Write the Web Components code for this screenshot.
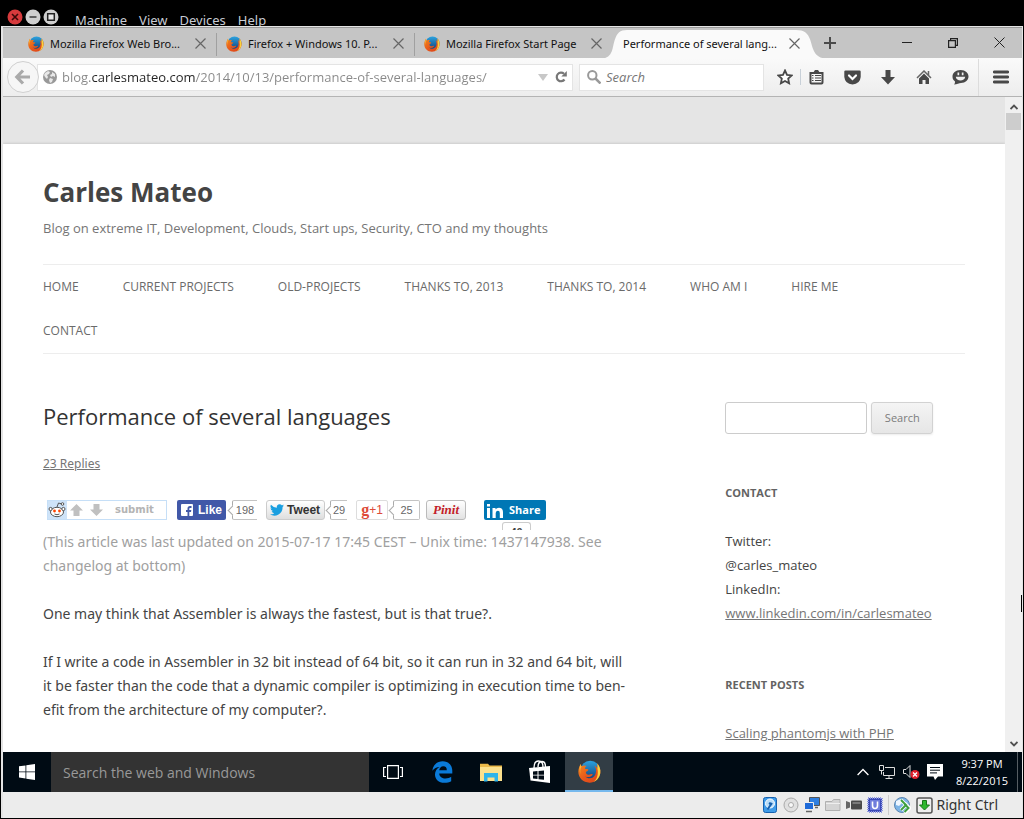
<!DOCTYPE html>
<html lang="en">
<head>
<meta charset="utf-8">
<title>Performance of several languages</title>
<style>
html,body{margin:0;height:100%;background:#000}
body{font-family:"Open Sans","Noto Sans",sans-serif}
</style>
</head>
<body>
<vm-window></vm-window>
<script>
const base = `*{box-sizing:border-box}button{font:inherit;border:0;background:none;padding:0;margin:0;color:inherit}svg{display:block}input{font:inherit;border:0;outline:0;margin:0;min-width:0}a{color:inherit;text-decoration:none}`;
function define(name, css, html) {
  const t = document.createElement('template');
  t.innerHTML = `<style>${base}${css}</style>${html}`;
  customElements.define(name, class extends HTMLElement {
    constructor() {
      super();
      this.attachShadow({mode: 'open'}).append(t.content.cloneNode(true));
    }
  });
}

define('fox-icon', `:host{display:block;width:16px;height:16px;flex:none}svg{width:100%;height:100%}`, `
<svg viewBox="0 0 32 32" aria-hidden="true">
<defs><linearGradient id="o" x1="0" y1="0" x2="1" y2="1"><stop offset="0" stop-color="#f08a1c"/><stop offset=".5" stop-color="#e8581b"/><stop offset="1" stop-color="#d8401a"/></linearGradient>
<linearGradient id="b" x1="0" y1="0" x2="0" y2="1"><stop offset="0" stop-color="#2ba3e0"/><stop offset="1" stop-color="#123a72"/></linearGradient></defs>
<circle cx="17" cy="15" r="14" fill="url(#b)"/>
<path d="M27 5c3 4 4.600 8 4 13-1 8-7.500 13.500-15 13.500C7 31.500.5 25 .5 16.500.5 12 2 8 4 5.500c0 1.500.3 2.500 1 3.500 2-1.500 4.500-1.500 7-.5-1.500 1-2.500 2.500-2 4 2 0 4 0 4.500 1-.5 1.500-2 2-3.500 3-.5 2 1 4.500 4.500 4 2-.3 3.500-1.500 5-.5-2 4-7 4.500-10.500 3 4 4 11.500 3 14-2.500 2-4.500 1.500-9-1-12.500 2 1 3.500 2.500 4 4 .3-2 .3-4.500 0-7z" fill="url(#o)"/>
<path d="M27 5c3 4 4.600 8 4 13-.8 6-4.500 10.500-9.500 12.500C27 26 28.500 20 27 12c.3-2 .3-4.500 0-7z" fill="#fbd23c"/>
<path d="M4 5.500c0 1.500.3 2.500 1 3.500-2 3-2.500 7-1 11C1.500 15 1.500 9.500 4 5.500z" fill="#fbb034"/>
</svg>`);

define('vm-menubar', `:host{display:flex;height:26px;flex:none;background:#000;color:#c8ccd4;padding:0 0 0 6px;align-items:flex-start}
.c{display:flex;gap:2px;padding-top:9px}
nav{display:flex;gap:12px;margin-left:16px;font:13px/20px "Noto Sans",sans-serif;padding-top:10px}`, `
<div class="c">
<button aria-label="Close"><svg width="16" height="16"><circle cx="8" cy="8" r="7.500" fill="#d63a3c"/><path d="M5 5l6 6M11 5l-6 6" stroke="#3a0808" stroke-width="1.600"/></svg></button>
<button aria-label="Minimize"><svg width="16" height="16"><circle cx="8" cy="8" r="7.500" fill="#cfcfcf"/><path d="M4.500 8h7" stroke="#444" stroke-width="1.600"/></svg></button>
<button aria-label="Maximize"><svg width="16" height="16"><circle cx="8" cy="8" r="7.500" fill="#cfcfcf"/><path d="M4.700 4.700h6.600v6.600h-6.600z" fill="#e8e8e8" stroke="#222" stroke-width="1.500"/></svg></button>
</div>
<nav><a href="#">Machine</a><a href="#">View</a><a href="#">Devices</a><a href="#">Help</a></nav>`);

define('browser-tab', `:host{display:flex;position:relative;flex:0 1 198px;min-width:0;height:31px;align-items:center;padding:0 9px 0 9px;font:11px/16px "Noto Sans",sans-serif;color:#111}
:host(:not([last]):not([active])):after{content:"";position:absolute;right:0;top:5px;width:1px;height:23px;background:#a0a0a0}
.shape{display:none}
span{flex:1;min-width:0;white-space:nowrap;position:relative;margin-left:6px}
button{position:relative;width:16px;height:16px;flex:none;display:grid;place-items:center}
:host([active]){padding:0 9px 0 4px;z-index:1}
:host([active]) .shape{display:block;position:absolute;left:-12px;top:2px;width:calc(100% + 28px);height:29px}`, `
<svg class="shape" viewBox="0 0 226 28" preserveAspectRatio="none"><path d="M0 28C13 27 11 16 14 9c2-6 5-9 12-9h169c8 0 12 3 14 9 3 8 3 18 17 19z" fill="#fafafa"/></svg>
<slot name="icon"></slot><span><slot></slot></span>
<button aria-label="Close tab"><svg width="11" height="11"><path d="M.5.5l10 10M10.500.5l-10 10" stroke="#666" stroke-width="1.200"/></svg></button>`);

define('tab-strip', `:host{display:flex;height:31px;flex:none;background:#c5c5c5;border-top:1px solid #999;padding-left:16px}
.new{width:36px;margin-left:1px;display:grid;place-items:center}
.win{margin-left:auto;display:flex}.win button{width:46px;height:29px;display:grid;place-items:center}`, `
<browser-tab><fox-icon slot="icon"></fox-icon>Mozilla Firefox Web Bro...</browser-tab>
<browser-tab><fox-icon slot="icon"></fox-icon>Firefox + Windows 10. P...</browser-tab>
<browser-tab last><fox-icon slot="icon"></fox-icon>Mozilla Firefox Start Page</browser-tab>
<browser-tab active>Performance of several lang...</browser-tab>
<button class="new" aria-label="New tab"><svg width="12" height="12"><path d="M6 0v12M0 6h12" stroke="#4a4a4a" stroke-width="2"/></svg></button>
<div class="win">
<button aria-label="Minimize"><svg width="10" height="10"><path d="M0 4.500h10" stroke="#222"/></svg></button>
<button aria-label="Restore"><svg width="10" height="10" fill="none" stroke="#222" stroke-width="1.200"><path d="M.6 2.600h6.800v6.800H.6zM2.600 2.600V.6h6.800v6.800h-2"/></svg></button>
<button aria-label="Close"><svg width="11" height="11"><path d="M.5.5l10 10M10.500.5l-10 10" stroke="#222"/></svg></button>
</div>`);

define('nav-toolbar', `:host{display:flex;height:39px;flex:none;align-items:center;background:linear-gradient(#fafafa,#ededed);border-bottom:1px solid #b4b4b4;font-size:13px;padding-left:4px}
.back{width:32px;height:32px;border-radius:50%;border:1px solid #d0d0d0;background:#f6f6f6;display:grid;place-items:center;flex:none;position:relative}
.url,.find{display:flex;align-items:center;background:#fff;border:1px solid #e4e4e4;height:27px}
.url{flex:1 1 0;min-width:0;margin-left:-2px;padding:0 5px 0 5px}
.url input{flex:1;height:24px;margin-left:5px;padding:0;color:#888;-webkit-text-fill-color:transparent;background:linear-gradient(90deg,#888 30px,#222 30px,#222 133px,#888 133px);-webkit-background-clip:text;background-clip:text}
.go{margin-left:7px}
.find{flex:0 1 185px;margin:0 6px 0 6px;padding-left:7px}
.find input{flex:1;height:24px;background:none;padding:0;margin-left:5px;font-style:italic}
.find input::placeholder{color:#777;opacity:1}
.b{flex:none;display:grid;place-items:center;height:38px;width:36px}
.star{width:30px}.list{width:31px;margin-right:2px}.menu{width:43px}
i{width:1px;height:16px;background:#c8d0d8;flex:none}i.tall{height:37px;background:#dcdcdc}`, `
<button class="back" aria-label="Back"><svg width="18" height="16" fill="none" stroke="#aaa" stroke-width="3.200"><path d="M9 1.500L2.800 8 9 14.500M3 8h13"/></svg></button>
<div class="url">
<svg width="14" height="14" viewBox="0 0 14 14"><circle cx="7" cy="7" r="7" fill="#999"/><path d="M2 3l3-2 2 1-1 2-2 1 1 2-1 2-2-2-1-2zM9 2l3 2v3l-2-1-2 1-1-2 2-1zM7 8l3 1-1 3-2 1-1-3z" fill="#e8e8e8"/></svg>
<input aria-label="Address" value="blog.carlesmateo.com/2014/10/13/performance-of-several-languages/">
<svg width="10" height="7"><path d="M0 0h10L5 7z" fill="#c8c8c8"/></svg>
<button class="go" aria-label="Reload"><svg width="12" height="12" viewBox="0 0 12 12"><path d="M9.500 8.500A4.300 4.300 0 1 1 9 2.800" fill="none" stroke="#777" stroke-width="2.200"/><path d="M11.800 0v5.500H6.300z" fill="#777"/></svg></button>
</div>
<div class="find"><svg width="14" height="14" fill="none" stroke="#999" stroke-width="2"><circle cx="5.300" cy="5.300" r="4.200"/><path d="M8.500 8.500l5 5" stroke-width="2.500"/></svg><input aria-label="Search" placeholder="Search"></div>
<button class="b star" aria-label="Bookmark"><svg width="16" height="16" viewBox="0 0 16 16"><path d="M8 1.500l2 4.300 4.700.6-3.500 3.200.9 4.700L8 12l-4.100 2.300.9-4.700L1.300 6.400 6 5.800z" fill="#fff" stroke="#484848" stroke-width="1.800"/></svg></button><i></i>
<button class="b list" aria-label="Bookmarks list"><svg width="15" height="16"><path d="M1.500 4h12v9.500q0 1-1 1h-10q-1 0-1-1z" fill="#f6f6f6" stroke="#484848" stroke-width="2"/><path d="M4 4l2-3h3l2 3z" fill="#484848"/><path d="M3 6.500h1.500M6 6.500h6M3 9h1.500M6 9h6M3 11.500h1.500M6 11.500h6" stroke="#484848"/></svg></button>
<button class="b" aria-label="Pocket"><svg width="17" height="15"><path d="M1.500.5h14q1.200 0 1.200 1.200V7q-.7 7-8.200 7.500Q1 14 .3 7V1.700Q.3.5 1.500.5z" fill="#484848"/><path d="M5 5.500L8.500 9 12 5.500" fill="none" stroke="#fff" stroke-width="2.200" stroke-linecap="round"/></svg></button>
<button class="b" aria-label="Downloads"><svg width="14" height="15"><path d="M4.500 0h5v7H14l-7 7.500L0 7h4.500z" fill="#484848"/></svg></button>
<button class="b" aria-label="Home"><svg width="16" height="15"><path d="M1 8l7-7 7 7M12.500 5V1" fill="none" stroke="#666" stroke-width="1.500"/><path d="M3 8.500l5-5 5 5V14H9.500v-4h-3v4H3z" fill="#484848"/></svg></button>
<button class="b" aria-label="Chat"><svg width="17" height="15"><path d="M8.500 0c5 0 8 3 8 6.500S13.500 13 9 13c-2 0-4 1.500-7 1.500 1-1 1-2 1-3C1 10 .5 8.500.5 6.500.5 3 3.500 0 8.500 0z" fill="#484848"/><path d="M3.800 6.800h9.400c-.4 5-9 5-9.400 0zM5.500 2.500h1.700v2.700H5.500zM9.800 2.500h1.700v2.700H9.800z" fill="#f0f0f0"/></svg></button>
<i class="tall"></i>
<button class="b menu" aria-label="Menu"><svg width="16" height="14"><path d="M1.300 2h13.400M1.300 7h13.400M1.300 12h13.400" stroke="#484848" stroke-width="2.800" stroke-linecap="round"/></svg></button>`);

define('share-row', `:host{display:flex;height:30px;align-items:flex-start;padding-left:4px;font:11px/18px "Liberation Sans",sans-serif;color:#666}
a,span{display:flex;align-items:center;height:20px;flex:none;white-space:nowrap}
.rd{width:120px;border:1px solid #c6dff7;background:linear-gradient(90deg,#cee3f8 19px,#fff 19px);font:bold 10px/18px "DejaVu Sans",sans-serif;color:#b4b4b4}
.rd svg+svg{margin-left:1px}.rd b{margin-left:10px}
.fb{width:49px;margin-left:10px;background:#4158a8;border-radius:2px;color:#fff;font-weight:bold;font-size:12px;gap:5px;padding-left:4px}
.n{border:1px solid #c4c4c4;border-left-color:#aaa;border-radius:2px;position:relative;justify-content:center;background:#fff}
.n:before{content:"";position:absolute;left:-4px;top:6px;width:6px;height:6px;background:#fff;border:solid #aaa;border-width:0 0 1px 1px;transform:rotate(45deg)}
.cut{border-right:0;border-radius:2px 0 0 2px}
.f1{width:25px;margin-left:6px}.f2{width:17px;margin-left:5px}.f3{width:27px;margin-left:5px}
.tw{width:59px;margin-left:9px;border:1px solid #ccc;border-radius:3px;background:linear-gradient(#fff,#dedede);color:#333;font-weight:bold;font-size:12px;padding-left:3px;gap:3px}
.gp{width:32px;margin-left:9px;border:1px solid #ddd;border-radius:2px;color:#dd4b39;justify-content:center;font-size:12px}
.gp b{font:bold 16px/16px "Liberation Serif",serif;}
.pin{width:40px;margin-left:6px;border:1px solid #bbb;border-radius:3px;background:linear-gradient(#fff,#e2e2e2);justify-content:center;color:#c31d28;font:italic bold 13px/18px "Liberation Serif",serif}
.li{width:62px;margin-left:18px;position:relative}
.li a{width:62px;background:#0077b5;border-radius:2px;color:#fff;font:bold 11px/20px "Open Sans",sans-serif;padding-left:3px;gap:6px}
.li small{position:absolute;left:18px;top:22px;width:29px;height:8px;overflow:hidden;border:1px solid #ccc;border-bottom:0;border-radius:3px 3px 0 0;text-align:center;font:bold 11px/18px "Liberation Sans",sans-serif;color:#444}`, `
<a class="rd" href="#"><svg width="19" height="18" viewBox="0 0 19 18"><ellipse cx="9" cy="11" rx="6.500" ry="4.700" fill="#fff" stroke="#555"/><circle cx="2.600" cy="8" r="1.600" fill="#fff" stroke="#555"/><circle cx="15.400" cy="8" r="1.600" fill="#fff" stroke="#555"/><path d="M9 6l1.500-4L14 3" fill="none" stroke="#555"/><circle cx="14.500" cy="3" r="1.300" fill="#fff" stroke="#555"/><circle cx="6.500" cy="10" r="1.400" fill="#ff4500"/><circle cx="11.500" cy="10" r="1.400" fill="#ff4500"/><path d="M6.500 13q2.500 1.500 5 0" fill="none" stroke="#555"/></svg>
<svg width="37" height="14" fill="#c0c0c0"><path d="M8.500 1L15 7.500h-3.500V13h-6V7.500H2zM28.500 13L35 6.500h-3.500V1h-6v5.500H22z"/></svg><b>submit</b></a>
<a class="fb" href="#"><svg width="12" height="12"><rect width="12" height="12" rx="1" fill="#fff"/><path d="M6.500 12V8H5V6h1.500V4.500Q6.500 2 9 2h1.500v2H9q-.7 0-.7.8V6h2L10 8H8.300v4z" fill="#4158a8"/></svg>Like</a><span class="n cut f1">198</span>
<a class="tw" href="#"><svg width="14" height="12" viewBox="0 0 24 20"><path d="M24 2.400a10 10 0 0 1-2.800.8A5 5 0 0 0 23.300.5a10 10 0 0 1-3.100 1.200 4.900 4.900 0 0 0-8.400 4.500A14 14 0 0 1 1.700 1a4.900 4.900 0 0 0 1.500 6.600A5 5 0 0 1 1 7a4.900 4.900 0 0 0 4 4.900 5 5 0 0 1-2.300 0 4.900 4.900 0 0 0 4.600 3.500A10 10 0 0 1 0 17.400a14 14 0 0 0 21.500-12.500A10 10 0 0 0 24 2.400z" fill="#1a9fe0"/></svg>Tweet</a><span class="n cut f2">29</span>
<a class="gp" href="#"><b>g</b>+1</a><span class="n f3">25</span>
<a class="pin" href="#">Pinit</a>
<div class="li"><a href="#"><svg width="16" height="15" fill="#fff"><path d="M0 5h3v10H0zM0 1h3v2.500H0zM5.500 5h3v1.500Q9.500 4.800 12 4.800q4 0 4 4.500V15h-3.200V10q0-2.300-1.900-2.300T8.700 10v5H5.500z"/></svg>Share</a><small>40</small></div>`);

define('blog-header', `:host{display:block}
h1{margin:0;font-size:26px;line-height:48px;color:#444;font-weight:700}
p{margin:0 0 24px;font-size:13px;line-height:24px;color:#757575}
ul{list-style:none;margin:0;padding:0 40px 0 0;display:flex;flex-wrap:wrap;column-gap:44px;border:solid #ededed;border-width:1px 0;font-size:12px;line-height:44px;color:#6a6a6a}`, `
<h1>Carles Mateo</h1><p>Blog on extreme IT, Development, Clouds, Start ups, Security, CTO and my thoughts</p>
<nav><ul><li><a href="#">HOME</a></li><li><a href="#">CURRENT PROJECTS</a></li><li><a href="#">OLD-PROJECTS</a></li><li><a href="#">THANKS TO, 2013</a></li><li><a href="#">THANKS TO, 2014</a></li><li><a href="#">WHO AM I</a></li><li><a href="#">HIRE ME</a></li><li><a href="#">CONTACT</a></li></ul></nav>`);

define('blog-article', `:host{display:block;font:14px/24px "Noto Sans",sans-serif;color:#444}
h2{margin:0 0 22px;font:400 22px/28px "Open Sans",sans-serif;color:#333}
.r{display:block;font-size:12px;margin-bottom:24px;color:#757575}.r a{text-decoration:underline}
p{margin:0 0 24px;padding-right:14px}.u{color:#a0a0a0}`, `
<h2>Performance of several languages</h2><div class="r"><a href="#">23 Replies</a></div>
<share-row></share-row>
<p class="u">(This article was last updated on 2015-07-17 17:45 CEST – Unix time: 1437147938. See changelog at bottom)</p>
<p>One may think that Assembler is always the fastest, but is that true?.</p>
<p>If I write a code in Assembler in 32 bit instead of 64 bit, so it can run in 32 and 64 bit, will it be faster than the code that a dynamic compiler is optimizing in execution time to ben&shy;efit from the architecture of my computer?.</p>
<p>What if a future JIT compiler is able to use all the cores to execute a single thread</p>`);

define('blog-sidebar', `:host{display:block;font-size:13px;line-height:24px;color:#444}
form{display:flex;gap:4px;margin-bottom:47px}
input{width:142px;height:32px;border:1px solid #ccc;border-radius:3px;padding:0 8px}
form button{width:62px;height:32px;border:1px solid #d2d2d2;border-radius:3px;background:linear-gradient(#f4f4f4,#e6e6e6);color:#7c7c7c;font-size:11px;box-shadow:0 1px 2px rgba(64,64,64,.1)}
h3{margin:0 0 24px;font-size:11px;line-height:24px;color:#636363}
p,ul{margin:0 0 48px;padding:0;list-style:none}
a{color:#757575;text-decoration:underline}`, `
<form><input aria-label="Search for"><button type="button">Search</button></form>
<h3>CONTACT</h3><p>Twitter:<br>@carles_mateo<br>LinkedIn:<br><a href="#">www.linkedin.com/in/carlesmateo</a></p>
<h3>RECENT POSTS</h3><ul><li><a href="#">Scaling phantomjs with PHP</a></li><li><a href="#">My second hand-made book</a></li></ul>`);

define('page-view', `:host{display:flex;flex:1 1 0;min-height:0;overflow:hidden;background:#e5e5e5}
.doc{flex:1;min-width:0;overflow:hidden;padding-top:47px}
.sheet{background:#fff;padding:24px 40px;box-shadow:0 0 3px rgba(0,0,0,.2)}
.cols{display:flex;justify-content:space-between;margin-top:48px}
blog-article{flex:0 0 65%}blog-sidebar{flex:0 0 26%}
.bar{flex:none;width:17px;background:#f0f0f0;display:flex;flex-direction:column;align-items:center;padding:7px 0 5px;position:relative}
.thumb{width:15px;height:17px;background:#cdcdcd;margin-top:3px}
.bar svg:last-of-type{margin-top:auto}
.caret{position:absolute;right:0;top:76%;width:1px;height:17px;background:#000}`, `
<div class="doc"><div class="sheet"><blog-header></blog-header><div class="cols"><blog-article></blog-article><blog-sidebar></blog-sidebar></div></div></div>
<div class="bar"><svg width="8" height="6"><path d="M.5 5L4 1.500 7.500 5" fill="none" stroke="#505050" stroke-width="1.800"/></svg><div class="thumb"></div><svg width="8" height="6"><path d="M.5 1L4 4.500 7.500 1" fill="none" stroke="#505050" stroke-width="1.800"/></svg><div class="caret"></div></div>`);

define('win-taskbar', `:host{display:flex;flex:none;height:40px;background:#000b14;color:#fff;align-items:stretch}
button{flex:none;width:48px;display:grid;place-items:center}
input{width:318px;background:#333;padding:0 12px;font-size:14px}input::placeholder{color:#999;opacity:1}
.apps{display:flex;gap:1px}.on{background:#323d45;border-bottom:2px solid #76b9ed}.on fox-icon{width:23px;height:23px}
.tray{margin-left:auto;display:flex;align-items:center}.tray button{width:24px;height:40px}
time{width:66px;font-size:11px;line-height:17px;text-align:center;margin-left:2px;margin-right:2px}
i{align-self:stretch;width:5px;border-left:1px solid #555d63}`, `
<button aria-label="Start"><svg width="16" height="16" fill="#fff"><path d="M0 2.300l6.500-.9v6.100H0zM7.300 1.300L16 0v7.500H7.300zM0 8.300h6.500v6.200L0 13.600zM7.300 8.300H16V16l-8.700-1.300z"/></svg></button>
<input aria-label="Search the web and Windows" placeholder="Search the web and Windows">
<div class="apps">
<button aria-label="Task view"><svg width="20" height="14" fill="none" stroke="#fff" stroke-width="1.200"><path d="M4.600.6h10.800v12.800H4.600zM3 2.500H.6v9H3M17 2.500h2.400v9H17"/></svg></button>
<button aria-label="Edge"><svg width="21" height="22" viewBox="0 0 21 22"><path d="M.3 9.800C1 4 5 .3 10.700.3c6 0 9.600 4.200 9.600 9.500v2.600H7.200c.2 3.400 3 5 6.300 5 2.200 0 4.200-.7 5.700-1.700v4.500c-1.800 1-4.200 1.600-6.800 1.600C6.600 21.800 3 18.300 3 13.500c0-3.300 1.800-6 4.600-7.500C4.700 6.200 2 7.400.3 9.800zm6.900-.6h7.600c0-2.400-1-4-3.500-4-2.300 0-3.800 1.700-4.100 4z" fill="#0a7ad8"/></svg></button>
<button aria-label="File Explorer"><svg width="22" height="19"><path d="M0 2V.8h8l1.500 1.700H22V18H0z" fill="#eab94a"/><path d="M0 4h22v14H0z" fill="#fbe08d"/><path d="M4 18.500V10h14v8.500h-3.500v-4h-7v4z" fill="#2fb4ea"/></svg></button>
<button aria-label="Store"><svg width="22" height="24"><path d="M0 8l21-2v17L1.500 20.500z" fill="#fff"/><path d="M5 8C5 4 6.500 1 9.500 1S14 3 14 7M9 7c0-4 2-5.500 4-5.500S16.500 3 16.500 7" fill="none" stroke="#fff" stroke-width="1.400"/><path d="M4 11.500l4.500-.4v3.600H4zM9.500 11l5.500-.5v4.200H9.500zM4 15.600h4.500v3.500L4 18.500zM9.500 15.600H15v4.200l-5.500-.6z" fill="#000b14"/></svg></button>
<button class="on" aria-label="Firefox"><fox-icon></fox-icon></button>
</div>
<div class="tray">
<button aria-label="Hidden icons"><svg width="12" height="8"><path d="M.6 7L6 1.500 11.400 7" fill="none" stroke="#fff" stroke-width="1.300"/></svg></button>
<button aria-label="Network"><svg width="16" height="15" fill="none" stroke="#ddd"><path d="M6 2.500h9.500v8H4.500V7M10 10.500v3M6.500 13.500h7M.5.5h4v5h-4zM2.500 5.500v4"/></svg></button>
<button aria-label="Volume"><svg width="17" height="16"><path d="M.5 5.500h2.500L7 1.500v12l-4-4H.5z" fill="none" stroke="#ddd"/><circle cx="12" cy="10.500" r="4.500" fill="#e0202c"/><path d="M10 8.500l4 4M14 8.500l-4 4" stroke="#fff" stroke-width="1.300"/></svg></button>
<button aria-label="Notifications"><svg width="16" height="16"><path d="M0 0h16v12.500h-5L8 16l-1.500-3.500H0z" fill="#fff"/><path d="M3 3.500h10M3 6.200h10M3 8.900h7" stroke="#000b14"/></svg></button>
<time>9:37 PM<br>8/22/2015</time><i></i></div>`);

define('vm-statusbar', `:host{display:flex;flex:none;height:26px;background:#ececec;align-items:center;justify-content:flex-end;gap:5px;padding-right:24px;font:14px/20px "Noto Sans",sans-serif;color:#333}
i{width:1px;height:20px;background:#ccc}span{margin-left:-2px}`, `
<svg width="16" height="16"><rect x="1.500" y=".5" width="13" height="15" rx="2" fill="#3f9be8" stroke="#1660ae"/><circle cx="8" cy="6.500" r="4.500" fill="#b8dcf8" stroke="#fff"/><path d="M10 6L5.500 12.500" stroke="#1660ae" stroke-width="2"/><circle cx="8" cy="6.500" r="1.300" fill="#1660ae"/></svg>
<svg width="16" height="16"><circle cx="8" cy="8" r="7" fill="#e0e0e0" stroke="#aaa"/><circle cx="8" cy="8" r="2.500" fill="#f8f8f8" stroke="#aaa"/></svg>
<svg width="16" height="16"><path d="M5.500.500h10v8h-10z" fill="#2f7fe0" stroke="#555"/><path d="M.5 5.500h9v7h-9z" fill="#1f6ad8" stroke="#eee"/><path d="M2 14.500h6M11 10.500h3" stroke="#666" stroke-width="1.500"/></svg>
<svg width="16" height="16"><path d="M.5 13.500v-9H7l1.500-2h6.500v11z" fill="#d4d4d4" stroke="#b0b0b0"/><path d="M1 6.500h14" stroke="#eee"/></svg>
<svg width="16" height="16"><rect x="5" y="3.500" width="11" height="9" rx="1" fill="#4a4a4a"/><path d="M0 4l4 1.500v5L0 12z" fill="#666"/><path d="M6.500 6h8" stroke="#aaa"/></svg>
<svg width="16" height="16"><rect x="1" y="1" width="14" height="14" fill="#3b49b8" stroke="#8f98e0" stroke-width="2" stroke-dasharray="1 1"/><rect x="3" y="3" width="10" height="10" fill="#6f7ddc"/><path d="M5.500 4.500v4q0 3 2.500 3t2.500-3v-4" fill="none" stroke="#fff" stroke-width="1.600"/></svg>
<i></i>
<svg width="17" height="17"><circle cx="8" cy="8" r="7.500" fill="#7db4e6" stroke="#5d86b0"/><path d="M2 4l5-2 1 4-3 3-3-1z" fill="#eef6ff"/><path d="M7 3l5 5-5 5M10.500 6l5 5-5 5" fill="none" stroke="#fff" stroke-width="3.600"/><path d="M7 3l5 5-5 5M10.500 7l4 4-4 4" fill="none" stroke="#3fa03f" stroke-width="2"/></svg>
<svg width="17" height="17"><rect x="1" y="1" width="15" height="15" rx="2" fill="#eee" stroke="#555" stroke-width="1.500"/><path d="M6.500 3.500h4V8h3l-5 5-5-5h3z" fill="#2fb82f" stroke="#187818"/></svg>
<span>Right Ctrl</span>`);

define('vm-window', `:host{display:flex;flex-direction:column;height:100vh;padding:0 1px 1px;background:#000;box-sizing:border-box}
.guest{flex:1;min-height:0;display:flex;flex-direction:column;border:solid #e4e4e4;border-width:1px 1px 0 2px}`, `
<vm-menubar></vm-menubar>
<div class="guest"><tab-strip></tab-strip><nav-toolbar></nav-toolbar><page-view></page-view><win-taskbar></win-taskbar><vm-statusbar></vm-statusbar></div>`);
</script>
</body>
</html>
